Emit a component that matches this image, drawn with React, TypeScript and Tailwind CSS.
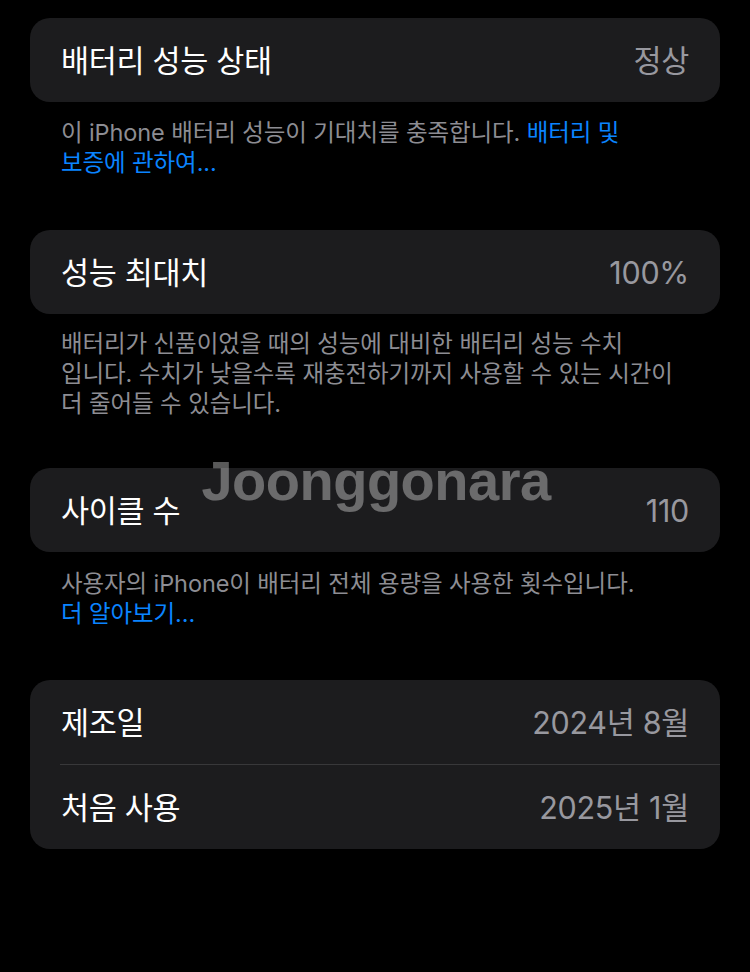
import React from 'react';

const FONT = { fontFamily: 'Inter, "Noto Sans CJK KR", sans-serif' };

function Row({ label, value }: { label: string; value: string }) {
  return (
    <div className="flex items-center justify-between h-[84px] pl-[31px] pr-[31px] pt-[2px]">
      <span className="text-[30.5px] text-white tracking-[-0.3px]">{label}</span>
      <span className="text-[30.5px] text-[#98989f] tracking-[-0.3px]">{value}</span>
    </div>
  );
}

export default function App() {
  return (
    <div className="relative min-h-[972px] bg-black px-[30px] pt-[18px]" style={FONT}>
      {/* 배터리 성능 상태 */}
      <div className="rounded-[20px] bg-[#1c1c1e]">
        <Row label="배터리 성능 상태" value="정상" />
      </div>
      <p className="pl-[31px] pt-[16px] pb-[52px] text-[23.5px] leading-[30px] text-[#8d8d93] tracking-[-0.1px]">
        이 iPhone 배터리 성능이 기대치를 충족합니다. <span className="text-[#0a84ff]">배터리 및</span>
        <br />
        <span className="text-[#0a84ff]">보증에 관하여...</span>
      </p>

      {/* 성능 최대치 */}
      <div className="rounded-[20px] bg-[#1c1c1e]">
        <Row label="성능 최대치" value="100%" />
      </div>
      <p className="pl-[31px] pt-[15px] pb-[49px] text-[23.5px] leading-[30px] text-[#8d8d93] tracking-[-0.1px]">
        배터리가 신품이었을 때의 성능에 대비한 배터리 성능 수치
        <br />
        입니다. 수치가 낮을수록 재충전하기까지 사용할 수 있는 시간이
        <br />
        더 줄어들 수 있습니다.
      </p>

      {/* 사이클 수 */}
      <div className="rounded-[20px] bg-[#1c1c1e]">
        <Row label="사이클 수" value="110" />
      </div>
      <p className="pl-[31px] pt-[17px] pb-[51px] text-[23.5px] leading-[30px] text-[#8d8d93] tracking-[-0.1px]">
        사용자의 iPhone이 배터리 전체 용량을 사용한 횟수입니다.
        <br />
        <span className="text-[#0a84ff]">더 알아보기...</span>
      </p>

      {/* 제조일 / 처음 사용 */}
      <div className="rounded-[20px] bg-[#1c1c1e] overflow-hidden">
        <Row label="제조일" value="2024년 8월" />
        <div className="ml-[30px] h-px bg-[#38383a]" />
        <Row label="처음 사용" value="2025년 1월" />
      </div>

      {/* watermark */}
      <div
        className="pointer-events-none absolute left-0 right-0 top-[439px] pl-[2px] text-center text-[56px] font-bold tracking-[-0.5px] text-white/35"
        style={{ fontFamily: '"Liberation Sans", Arial, sans-serif' }}
      >
        Joonggonara
      </div>
    </div>
  );
}
